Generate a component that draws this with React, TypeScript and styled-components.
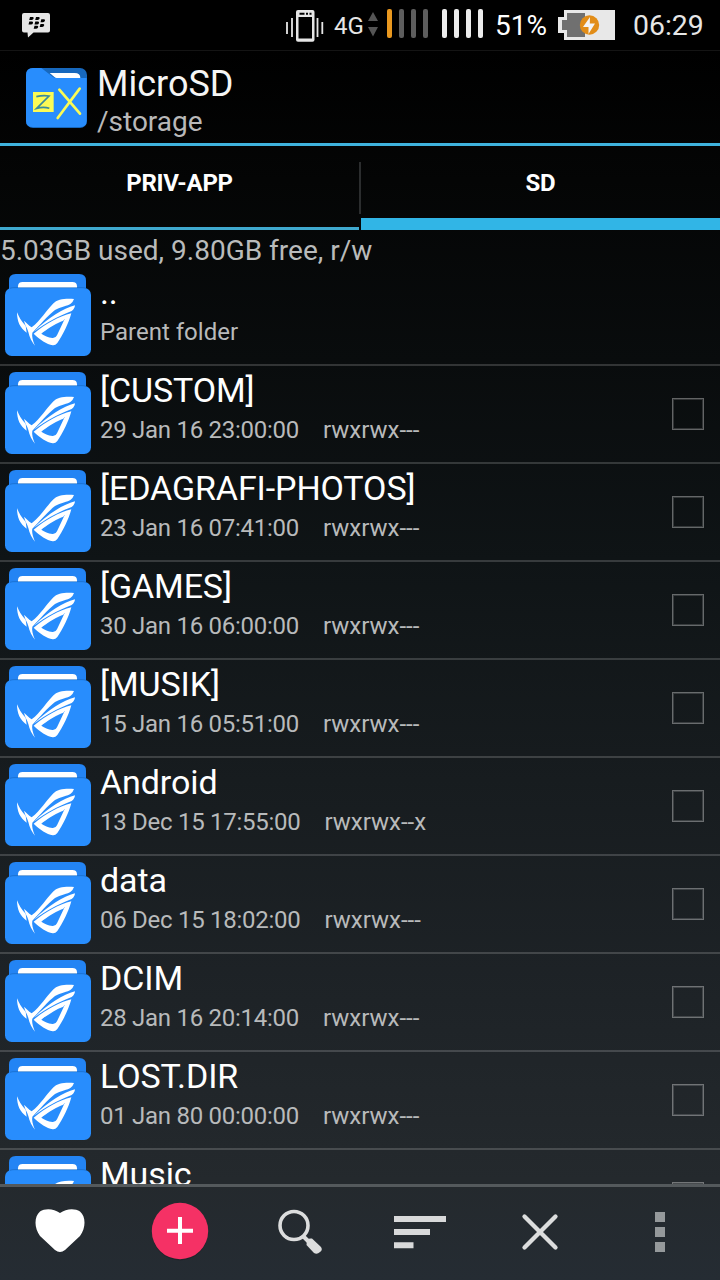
import React from "react";
import styled, { createGlobalStyle } from "styled-components";

const Global = createGlobalStyle`
  * { box-sizing: border-box; }
  body { margin: 0; background: #000; font-family: Roboto, "Liberation Sans", sans-serif; }
`;

const Screen = styled.main`
  width: 720px;
  height: 1280px;
  display: flex;
  flex-direction: column;
  overflow: hidden;
  background: linear-gradient(180deg, #000 0, #000 50px, #040505 180px, #090c0d 360px, #0f1416 560px, #171c1f 780px, #1e2327 1000px, #24292d 1180px, #252c33 1280px);
`;

const StatusBar = styled.header`
  height: 51px;
  flex: none;
  display: flex;
  align-items: center;
  background: #000;
  border-bottom: 1px solid #141414;
  color: #e6e6e6;
`;

const StatusIcon = styled.svg<{ $gap: number }>`
  display: block;
  flex: none;
  margin-left: ${(p) => p.$gap}px;
`;

const StatusText = styled.span<{ $size: number; $gap: number; $width: number; $color?: string }>`
  flex: none;
  width: ${(p) => p.$width}px;
  margin-left: ${(p) => p.$gap}px;
  font-size: ${(p) => p.$size}px;
  line-height: 52px;
  height: 50px;
  white-space: nowrap;
  color: ${(p) => p.$color ?? "#e6e6e6"};
`;

const TitleBar = styled.section`
  height: 95px;
  flex: none;
  display: flex;
  padding: 17px 0 0 26px;
  border-bottom: 3px solid #3fb3dd;
`;

const TitleText = styled.div`
  margin: -5px 0 0 10px;
`;

const Title = styled.h1`
  margin: 0;
  font-size: 36px;
  font-weight: 400;
  line-height: 42px;
  color: #f5f5f5;
`;

const Path = styled.div`
  font-size: 28px;
  line-height: 33px;
  color: #b9b9b9;
`;

const Tabs = styled.nav`
  height: 84px;
  flex: none;
  display: flex;
`;

const Tab = styled.div<{ $active?: boolean }>`
  width: 359px;
  padding-top: 23px;
  text-align: center;
  font-size: 24px;
  font-weight: 700;
  line-height: 28px;
  letter-spacing: -0.25px;
  color: #fff;
  border-bottom: ${(p) => (p.$active ? "12px solid #31b5e6" : "3px solid #3fa9cf")};
`;

const TabDivider = styled.div`
  width: 2px;
  height: 52px;
  margin-top: 16px;
  background: #2b2d2e;
`;

const List = styled.section`
  height: 954px;
  flex: none;
  overflow: hidden;
`;

const Usage = styled.div`
  height: 38px;
  padding-top: 4px;
  font-size: 28px;
  line-height: 33px;
  color: #b9bbbb;
  white-space: nowrap;
`;

const Row = styled.div`
  height: 98px;
  display: flex;
  align-items: flex-start;
  border-bottom: 2px solid rgba(255, 255, 255, 0.17);
  padding: 6px 16px 0 5px;
`;

const RowText = styled.div`
  flex: 1;
  margin: -3px 0 0 9px;
  white-space: nowrap;
`;

const Name = styled.div`
  font-size: 34px;
  line-height: 42px;
  height: 42px;
  letter-spacing: -0.1px;
  color: #fff;
`;

const Meta = styled.div`
  display: flex;
  gap: 24px;
  font-size: 24px;
  line-height: 28px;
  margin-top: 5px;
  color: #b8babb;
`;

const Stamp = styled.span`
  letter-spacing: -0.28px;
`;

const Checkbox = styled.div`
  width: 32px;
  height: 32px;
  margin-top: 26px;
  border: 1px solid rgba(255, 255, 255, 0.36);
  box-shadow: inset 0 0 0 1px rgba(255, 255, 255, 0.16);
`;

const Toolbar = styled.footer`
  height: 96px;
  flex: none;
  display: grid;
  grid-template-columns: repeat(6, 1fr);
  border-top: 3px solid #54595c;
`;

const Tool = styled.button`
  border: 0;
  padding: 0;
  background: none;
  display: block;
  svg { display: block; }
`;

const FolderIcon = () => (
  <svg width="86" height="82" viewBox="15 27 258 246">
    <path d="M27 47Q27 27 47 27H238Q258 27 258 47V90H27Z" fill="#2384f4" />
    <path d="M54 69V64Q54 51 68 51H217Q231 51 231 64V69Z" fill="#fff" />
    <rect x="15" y="69" width="258" height="204" rx="20" fill="#288dfd" />
    <path d="M30 70Q36 68 42 68H246Q252 68 258 70" stroke="#1769c4" strokeWidth="2" fill="none" />
    <g fill="#fff">
      <path d="M222 102C194 100 172 103 159 116C139 136 122 166 95 187L89 183L72 167C75 181 82 189 85 201C88 216 96 232 105 242C98 226 95 213 97 203C119 181 144 151 165 135C181 126 204 122 212 116Q219 111 222 102Z" />
      <path d="M51 142C57 155 62 167 77 182L80 203C60 190 51 169 51 142Z" />
      <path d="M225 121C188 132 148 155 102 200C138 174 170 155 215 138C222 133 224 128 225 121Z" />
      <path fillRule="evenodd" d="M214 145C178 154 138 176 101 206C120 225 140 237 158 241Q166 242 172 234C189 209 206 175 214 145ZM194 162L171 211Q167 220 157 219C144 217 134 213 124 206C145 187 166 171 194 162Z" />
      <path d="M126 203C145 180 168 164 196 158L190 167C168 174 150 188 126 203Z" />
    </g>
  </svg>
);

const AppIcon = () => (
  <svg width="61" height="60" viewBox="79 204 183 180">
    <rect x="79" y="204" width="183" height="180" rx="21" fill="#1768bd" />
    <path d="M150 219H225Q242 219 242 234H168Z" fill="#fff" />
    <path d="M100 204H125L160 231Q165 234 172 234H261V362Q261 381 240 381H100Q79 381 79 362V225Q79 204 100 204Z" fill="#288dfd" />
    <rect x="100" y="276" width="62" height="60" fill="#fbfb55" />
    <path d="M110 290Q130 285 148 288L111 325Q132 319 149 325" fill="none" stroke="#398b9b" strokeWidth="5" />
    <path d="M179 269L241 341M240 266L174 354" stroke="#fbfb55" strokeWidth="8" strokeLinecap="round" />
  </svg>
);

const rows = [
  ["..", "Parent folder", ""],
  ["[CUSTOM]", "29 Jan 16 23:00:00", "rwxrwx---"],
  ["[EDAGRAFI-PHOTOS]", "23 Jan 16 07:41:00", "rwxrwx---"],
  ["[GAMES]", "30 Jan 16 06:00:00", "rwxrwx---"],
  ["[MUSIK]", "15 Jan 16 05:51:00", "rwxrwx---"],
  ["Android", "13 Dec 15 17:55:00", "rwxrwx--x"],
  ["data", "06 Dec 15 18:02:00", "rwxrwx---"],
  ["DCIM", "28 Jan 16 20:14:00", "rwxrwx---"],
  ["LOST.DIR", "01 Jan 80 00:00:00", "rwxrwx---"],
  ["Music", "", ""],
];

const keys = [[30, 17], [36, 17], [29.3, 21.6], [35.3, 21.6], [41.3, 19.3], [40.5, 24], [34.5, 25.8]];

export default function App() {
  return (
    <>
      <Global />
      <Screen>
        <StatusBar>
          <StatusIcon $gap={22} width="29" height="50" viewBox="22 0 29 50">
            <path d="M24 13H48Q50 13 50 15V30.500Q50 32.500 48 32.500H33.500L28 37.500L27.500 32.500H24Q22 32.500 22 30.500V15Q22 13 24 13Z" fill="#e6e6e6" />
            {keys.map(([x, y]) => (
              <path key={`${x}-${y}`} d={`M${x} ${y}h2.800q1.200 .2.900 1.300q-.4 1.600-2 1.600h-2.500Z`} fill="#000" />
            ))}
          </StatusIcon>
          <StatusIcon $gap={234} width="39" height="50" viewBox="285 0 39 50">
            <path d="M287 22v12M292 18v19M317.500 18v19M322.300 22v12" stroke="#e6e6e6" strokeWidth="1.8" />
            <rect x="296" y="10" width="18.500" height="31.700" rx="2" fill="#e6e6e6" />
            <rect x="298.500" y="17" width="13.500" height="21.500" fill="#000" />
            <path d="M299.500 12.800h5v2h-5zM306 12.800h2v2h-2zM309.500 12.800h2v2h-2z" fill="#000" />
          </StatusIcon>
          <StatusText $size={24} $gap={10} $width={31}>4G</StatusText>
          <StatusIcon $gap={2} width="12" height="50" viewBox="367 0 12 50">
            <path d="M373 12L378 21H368ZM368 27H378L373 36.5Z" fill="#555" />
          </StatusIcon>
          <StatusIcon $gap={7} width="98" height="50" viewBox="386 0 98 50">
            {[387, 399, 411, 423, 442, 454, 466, 478].map((x, i) => (
              <rect key={x} x={x} y="9" width="5" height="29" rx="2" fill={i === 0 ? "#e9981f" : i < 4 ? "#5d5d5d" : "#ececec"} />
            ))}
          </StatusIcon>
          <StatusText $size={28} $gap={11} $width={55} $color="#fff">51%</StatusText>
          <StatusIcon $gap={8} width="57" height="50" viewBox="558 0 57 50">
            <path d="M564 10H615V40H564V33H558V17H564Z" fill="#e8e8e8" />
            <path d="M567 13H585V37H567V30H562V20H567Z" fill="#707070" />
            <circle cx="589.5" cy="25" r="9.7" fill="#e28d18" />
            <path d="M590 17L583 27H588.5V34L595 23.5H589.8Z" fill="#f4f4f4" />
          </StatusIcon>
          <StatusText $size={28.4} $gap={18} $width={75}>06:29</StatusText>
        </StatusBar>

        <TitleBar>
          <AppIcon />
          <TitleText>
            <Title>MicroSD</Title>
            <Path>/storage</Path>
          </TitleText>
        </TitleBar>

        <Tabs>
          <Tab>PRIV-APP</Tab>
          <TabDivider />
          <Tab $active>SD</Tab>
        </Tabs>

        <List>
          <Usage>5.03GB used, 9.80GB free, r/w</Usage>
          {rows.map(([name, date, mode], i) => (
            <Row key={name}>
              <FolderIcon />
              <RowText>
                <Name>{name}</Name>
                <Meta>
                  {mode ? <Stamp>{date}</Stamp> : <span>{date}</span>}
                  {mode && <span>{mode}</span>}
                </Meta>
              </RowText>
              {i > 0 && <Checkbox />}
            </Row>
          ))}
        </List>

        <Toolbar>
          <Tool aria-label="Favourites">
            <svg width="120" height="93" viewBox="0 1187 120 93">
              <path d="M60 1213C66 1208.500 75 1208 80 1211.500C86 1216.500 86 1228 80 1236L65 1250Q60 1254 55 1250L40 1236C34 1228 34 1216.500 40 1211.500C45 1208 54 1208.500 60 1213Z" fill="#fff" />
            </svg>
          </Tool>
          <Tool aria-label="Add">
            <svg width="120" height="93" viewBox="120 1187 120 93">
              <circle cx="180" cy="1232.5" r="28" fill="#1a2025" opacity=".6" />
              <circle cx="180" cy="1231" r="28.2" fill="#f53165" />
              <path d="M167 1230.7h26M180 1217v27" stroke="#fff" strokeWidth="4" />
            </svg>
          </Tool>
          <Tool aria-label="Search">
            <svg width="120" height="93" viewBox="240 1187 120 93">
              <circle cx="294" cy="1225.5" r="14" fill="none" stroke="#dcdddd" strokeWidth="3.6" />
              <path d="M303 1236L309 1242" stroke="#dcdddd" strokeWidth="4" />
              <path d="M307 1239.5Q309 1238 312 1238.5L321 1247Q323 1250 320 1252Q317 1255 314 1253L306.500 1245Z" fill="#dcdddd" />
            </svg>
          </Tool>
          <Tool aria-label="Sort">
            <svg width="120" height="93" viewBox="360 1187 120 93">
              <path d="M394 1216h52v6h-52zM394 1229h36v6h-36zM394 1242.300h19.500v6h-19.500z" fill="#d8d9da" />
            </svg>
          </Tool>
          <Tool aria-label="Close">
            <svg width="120" height="93" viewBox="480 1187 120 93">
              <path d="M524.500 1216.500L555.500 1247.500M555.500 1216.500L524.500 1247.500" stroke="#dcdddd" strokeWidth="4.300" strokeLinecap="round" />
            </svg>
          </Tool>
          <Tool aria-label="More">
            <svg width="120" height="93" viewBox="600 1187 120 93">
              <path d="M655 1212h10v10h-10zM655 1227h10v10h-10zM655 1242h10v10h-10z" fill="#95999b" />
            </svg>
          </Tool>
        </Toolbar>
      </Screen>
    </>
  );
}
